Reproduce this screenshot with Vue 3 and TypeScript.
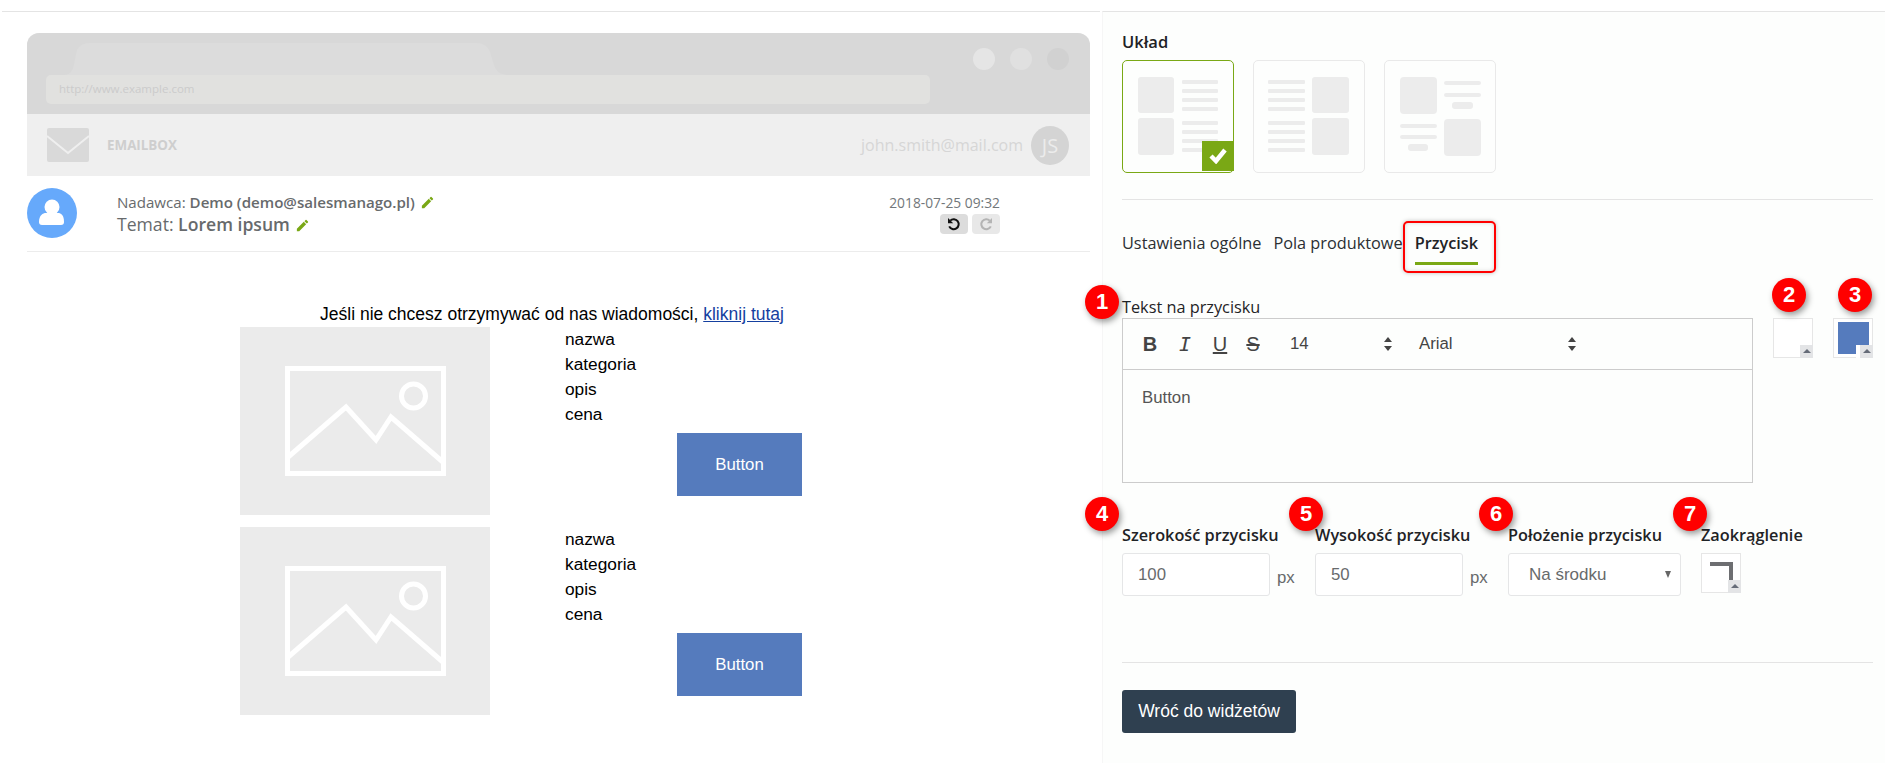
<script setup lang="ts">
interface Field { label: string; value: string; badge: string }
const products: string[] = ['nazwa', 'kategoria', 'opis', 'cena']
const rows: number[] = [1, 2]
const sizeFields: Field[] = [
  { label: 'Szerokość przycisku', value: '100', badge: '4' },
  { label: 'Wysokość przycisku', value: '50', badge: '5' },
]
</script>

<template>
  <div class="page">
    <section class="left">
      <div class="mock">
        <div class="chrome">
          <div class="chrome-main">
            <svg class="tab-shape" width="445" height="32" viewBox="0 0 445 32">
              <path d="M0 32C6 32 9 28 10 21L12 11C13 4 18 0 26 0L412 0C420 0 425 4 427 12L430 22C432 28 436 32 445 32Z" fill="#dcdcdc" />
            </svg>
            <div class="url">http://www.example.com</div>
          </div>
          <div class="dots">
            <i class="dot d1"></i><i class="dot d2"></i><i class="dot d3"></i>
          </div>
        </div>
        <div class="mailbar">
          <svg class="envelope" width="42" height="34" viewBox="0 0 42 34">
            <rect width="42" height="34" rx="2" fill="#d9d9d9" />
            <path d="M0 8L21 25L42 8" fill="none" stroke="#efefef" stroke-width="2" />
          </svg>
          <span class="brand">EMAILBOX</span>
          <span class="account">john.smith@mail.com</span>
          <span class="initials">JS</span>
        </div>
      </div>

      <header class="msg">
        <svg class="avatar" width="50" height="50" viewBox="0 0 50 50">
          <circle cx="25" cy="25" r="25" fill="#66a9fb" />
          <circle cx="25" cy="19" r="7.5" fill="#fff" />
          <path d="M12 34C12 27 16 25 19 25L31 25C34 25 37 27 37 34C37 36 36 37 34 37L15 37C13 37 12 36 12 34Z" fill="#fff" />
        </svg>
        <div class="meta">
          <div class="sender">
            Nadawca: <b>Demo (demo@salesmanago.pl)</b>
            <svg class="pencil" width="15" height="15" viewBox="0 0 24 24"><path d="M3 17.25V21h3.75L17.81 9.94l-3.75-3.75L3 17.25zM20.71 7.04a1 1 0 000-1.41l-2.34-2.34a1 1 0 00-1.41 0l-1.83 1.83 3.75 3.75 1.83-1.83z" /></svg>
          </div>
          <div class="subject">
            Temat: <b>Lorem ipsum</b>
            <svg class="pencil" width="15" height="15" viewBox="0 0 24 24"><path d="M3 17.25V21h3.75L17.81 9.94l-3.75-3.75L3 17.25zM20.71 7.04a1 1 0 000-1.41l-2.34-2.34a1 1 0 00-1.41 0l-1.83 1.83 3.75 3.75 1.83-1.83z" /></svg>
          </div>
        </div>
        <div class="when">
          <div class="date">2018-07-25 09:32</div>
          <div class="history">
            <span class="hist on">
              <svg width="14" height="14" viewBox="0 0 14 14"><path d="M3.2 3.6A5 5 0 1 1 2.2 9.4" fill="none" stroke="#111" stroke-width="2" /><path d="M1 1V6.2H6.2Z" fill="#111" /></svg>
            </span>
            <span class="hist">
              <svg width="14" height="14" viewBox="0 0 14 14"><g transform="matrix(-1 0 0 1 14 0)"><path d="M3.2 3.6A5 5 0 1 1 2.2 9.4" fill="none" stroke="#b4b4b4" stroke-width="2" /><path d="M1 1V6.2H6.2Z" fill="#b4b4b4" /></g></svg>
            </span>
          </div>
        </div>
      </header>

      <div class="mail">
        <p class="unsub">Jeśli nie chcesz otrzymywać od nas wiadomości, <a href="#">kliknij tutaj</a></p>
        <div v-for="row in rows" :key="row" class="product">
          <div class="photo">
            <svg width="161" height="110" viewBox="0 0 161 110">
              <rect x="2.500" y="2.500" width="156" height="105" fill="none" stroke="#fff" stroke-width="5" />
              <circle cx="128.500" cy="30" r="12" fill="none" stroke="#fff" stroke-width="5" />
              <path d="M2 92L61 41L91 74L106 51L159 97" fill="none" stroke="#fff" stroke-width="5" />
            </svg>
          </div>
          <div class="info">
            <div v-for="p in products" :key="p" class="line">{{ p }}</div>
            <div class="cta">Button</div>
          </div>
        </div>
      </div>
    </section>

    <section class="right">
      <div class="label heading">Układ</div>
      <div class="layouts">
        <div class="card selected">
          <svg width="110" height="111" viewBox="0 0 110 111" fill="#ececec">
            <rect x="15" y="16" width="36" height="36" rx="3" /><rect x="15" y="57" width="36" height="37" rx="3" />
            <rect x="59" y="19" width="36" height="4" rx="1" /><rect x="59" y="28" width="36" height="4" rx="1" /><rect x="59" y="37" width="36" height="4" rx="1" /><rect x="59" y="46" width="36" height="4" rx="1" />
            <rect x="59" y="60" width="36" height="4" rx="1" /><rect x="59" y="69" width="36" height="4" rx="1" /><rect x="59" y="78" width="36" height="4" rx="1" /><rect x="59" y="87" width="36" height="4" rx="1" />
          </svg>
          <span class="check">
            <svg width="18" height="16" viewBox="0 0 18 16"><path d="M2 8L7 13L16 2" fill="none" stroke="#fff" stroke-width="4.500" /></svg>
          </span>
        </div>
        <div class="card">
          <svg width="110" height="111" viewBox="0 0 110 111" fill="#ececec">
            <rect x="58" y="16" width="37" height="36" rx="3" /><rect x="58" y="57" width="37" height="37" rx="3" />
            <rect x="14" y="19" width="37" height="4" rx="1" /><rect x="14" y="28" width="37" height="4" rx="1" /><rect x="14" y="37" width="37" height="4" rx="1" /><rect x="14" y="46" width="37" height="4" rx="1" />
            <rect x="14" y="60" width="37" height="4" rx="1" /><rect x="14" y="69" width="37" height="4" rx="1" /><rect x="14" y="78" width="37" height="4" rx="1" /><rect x="14" y="87" width="37" height="4" rx="1" />
          </svg>
        </div>
        <div class="card">
          <svg width="110" height="111" viewBox="0 0 110 111" fill="#ececec">
            <rect x="15" y="16" width="37" height="37" rx="4" /><rect x="59" y="58" width="37" height="37" rx="4" />
            <rect x="59" y="20" width="37" height="4" rx="2" /><rect x="59" y="32" width="37" height="4" rx="2" /><rect x="67" y="41" width="21" height="7" rx="3" />
            <rect x="15" y="63" width="37" height="4" rx="2" /><rect x="15" y="74" width="37" height="4" rx="2" /><rect x="23" y="83" width="20" height="7" rx="3" />
          </svg>
        </div>
      </div>
      <div class="rule first"></div>

      <nav class="tabs">
        <span class="tab">Ustawienia ogólne</span>
        <span class="tab">Pola produktowe</span>
        <span class="tab active">Przycisk<i class="marker"></i></span>
      </nav>

      <div class="text-row">
        <div class="text-field">
          <span class="badge b1">1</span>
          <div class="label tight">Tekst na przycisku</div>
          <div class="editor">
            <div class="toolbar">
              <b class="tool t-b">B</b>
              <i class="tool t-i">I</i>
              <u class="tool t-u">U</u>
              <s class="tool t-s">S</s>
              <span class="pick p-size">14<span class="updown"></span></span>
              <span class="pick p-font">Arial<span class="updown"></span></span>
            </div>
            <div class="editor-body">Button</div>
          </div>
        </div>
        <div class="swatch s-white"><span class="badge over">2</span><i class="flag"></i></div>
        <div class="swatch s-blue"><span class="badge over">3</span><i class="fill"></i><i class="flag"></i></div>
      </div>

      <div class="size-row">
        <div v-for="f in sizeFields" :key="f.badge" class="size-field">
          <span class="badge side">{{ f.badge }}</span>
          <div class="label tight2">{{ f.label }}</div>
          <div class="with-unit">
            <input class="input" :value="f.value" readonly />
            <span class="unit">px</span>
          </div>
        </div>
        <div class="size-field">
          <span class="badge side">6</span>
          <div class="label tight2">Położenie przycisku</div>
          <div class="select">Na środku<i class="caret"></i></div>
        </div>
        <div class="size-field">
          <span class="badge side">7</span>
          <div class="label tight2">Zaokrąglenie</div>
          <div class="swatch corner"><i class="corner-mark"></i><i class="flag"></i></div>
        </div>
      </div>

      <div class="rule last"></div>
      <button class="back" type="button">Wróć do widżetów</button>
    </section>
  </div>
</template>

<style>
html, body { margin: 0; background: #fff; overflow: hidden; }
</style>

<style scoped>
.page {
  display: flex;
  box-sizing: border-box;
  width: 1885px;
  height: 763px;
  padding-top: 11px;
  font-family: "Open Sans", sans-serif;
  overflow: hidden;
}
.left {
  flex: none;
  box-sizing: border-box;
  width: 1098px;
  margin-left: 2px;
  padding: 21px 10px 0 25px;
  border-top: 1px solid #e4e4e4;
}
.mock { height: 143px; border-radius: 12px 12px 0 0; overflow: hidden; background: #efefef; }
.chrome { display: flex; height: 81px; box-sizing: border-box; padding: 10px 0 10px 19px; background: #d8d8d8; }
.chrome-main { display: flex; flex-direction: column; width: 884px; }
.tab-shape { display: block; margin-left: 18px; }
.url {
  height: 29px;
  padding-left: 13px;
  line-height: 27px;
  border-radius: 5px;
  background: #e1e1df;
  color: #cbcbcb;
  font-size: 11.500px;
}
.dots { display: flex; gap: 15px; margin: 5px 0 0 43px; height: 22px; }
.dot { width: 22px; height: 22px; border-radius: 50%; }
.d1 { background: #e5e5e5; }
.d2 { background: #e0e0e0; }
.d3 { background: #d1d1d1; }
.mailbar { display: flex; align-items: center; height: 62px; padding: 0 21px 0 20px; }
.envelope { flex: none; }
.brand { margin-left: 18px; font-size: 13.400px; font-weight: 700; color: #cecece; }
.account { margin-left: auto; font-size: 16px; color: #d6d6d6; }
.initials {
  display: flex;
  align-items: center;
  justify-content: center;
  width: 38px;
  height: 39px;
  margin-left: 8px;
  border-radius: 50%;
  background: #d4d4d4;
  color: #ececec;
  font-size: 20px;
}
.msg { display: flex; height: 76px; box-sizing: border-box; border-bottom: 1px solid #ececec; }
.avatar { flex: none; margin-top: 12px; }
.meta { margin: 16px 0 0 40px; color: #676a6c; }
.sender { height: 20px; line-height: 20px; font-size: 15.100px; }
.sender b, .subject b { font-weight: 600; }
.subject { height: 27px; margin-top: -1px; line-height: 27px; font-size: 17.600px; }
.pencil { fill: #7aa815; margin-left: 5px; vertical-align: -2px; }
.when { margin: 17px 90px 0 auto; display: flex; flex-direction: column; align-items: flex-end; }
.date { height: 20px; line-height: 20px; font-size: 13.800px; color: #72777a; }
.history { display: flex; gap: 4px; margin-top: 1px; }
.hist {
  display: flex;
  align-items: center;
  justify-content: center;
  width: 28px;
  height: 20px;
  border-radius: 4px;
  background: #e8e8e8;
}
.hist.on { background: #dcdcdc; }
.mail { width: 624px; margin-left: 213px; font-family: "Liberation Sans", Arial, sans-serif; color: #000; }
.unsub { margin: 0; height: 24px; padding-top: 51px; line-height: 22px; font-size: 17.500px; text-align: center; }
.unsub a { color: #15409f; }
.product { display: flex; margin-bottom: 12px; }
.photo {
  display: flex;
  align-items: center;
  justify-content: center;
  width: 250px;
  height: 188px;
  background: #ebebeb;
}
.info { margin-left: 75px; }
.line { height: 25px; line-height: 25px; font-size: 17.300px; }
.cta {
  width: 125px;
  height: 63px;
  margin: 6px 0 0 112px;
  line-height: 63px;
  text-align: center;
  background: #557bbd;
  color: #fff;
  font-size: 16.800px;
}
.right {
  flex: 1;
  min-width: 0;
  box-sizing: border-box;
  margin-left: 2px;
  padding: 20px 12px 0 19px;
  border-top: 1px solid #e4e4e4;
  border-left: 1px solid #f6f6f6;
  background: #fdfefd;
}
.label { height: 20px; line-height: 20px; font-size: 16.300px; font-weight: 600; color: #1f2326; white-space: nowrap; }
.label.heading { font-size: 16.500px; }
.layouts { display: flex; gap: 19px; margin-top: 8px; }
.card {
  position: relative;
  width: 112px;
  height: 113px;
  box-sizing: border-box;
  border: 1px solid #e9e9e9;
  border-radius: 5px;
}
.card svg { display: block; }
.card.selected { border-color: #7aa815; }
.check {
  position: absolute;
  right: -1px;
  bottom: 1px;
  display: flex;
  align-items: center;
  justify-content: center;
  width: 32px;
  height: 30px;
  background: #7aa815;
}
.rule { height: 1px; background: #e4e4e4; }
.rule.first { margin-top: 26px; }
.tabs { display: flex; padding-top: 33px; }
.tab { position: relative; padding-bottom: 12px; height: 20px; line-height: 20px; font-size: 16.300px; color: #2b2f33; margin-right: 12px; white-space: nowrap; }
.tab.active { font-weight: 600; color: #1f2326; }
.marker { position: absolute; left: 0; right: 0; bottom: 0; height: 3px; background: #7aa815; }
.tab.active::after {
  content: "";
  position: absolute;
  left: -12px;
  right: -18px;
  top: -12px;
  bottom: -8px;
  border: 2px solid #f00;
  border-radius: 5px;
  box-shadow: 0 0 4px rgba(0, 0, 0, 0.25), inset 0 0 4px rgba(0, 0, 0, 0.15);
}
.text-row { display: flex; margin-top: 32px; }
.text-field { position: relative; width: 632px; }
.label.tight { font-weight: 400; margin-bottom: 1px; }
.badge {
  position: absolute;
  display: flex;
  align-items: center;
  justify-content: center;
  width: 34px;
  height: 34px;
  border-radius: 50%;
  background: #f00;
  color: #fff;
  font-family: "Liberation Sans", Arial, sans-serif;
  font-size: 22px;
  font-weight: 700;
  box-shadow: 2px 3px 6px rgba(0, 0, 0, 0.4);
  z-index: 2;
}
.b1 { left: -37px; top: -12px; }
.editor { box-sizing: border-box; height: 165px; border: 1px solid #ccc; font-family: "Liberation Sans", Arial, sans-serif; }
.toolbar { display: flex; align-items: center; height: 50px; border-bottom: 1px solid #ccc; color: #444; }
.tool { flex: none; width: 16px; font-size: 20px; text-align: center; font-style: normal; }
.t-b { margin-left: 19px; }
.t-i { margin-left: 19px; font-family: "DejaVu Sans Mono", monospace; font-style: italic; }
.t-u { margin-left: 19px; }
.t-s { margin-left: 17px; }
.pick { display: flex; align-items: center; flex: none; justify-content: space-between; font-size: 16.800px; }
.p-size { width: 102px; margin-left: 29px; }
.p-font { width: 157px; margin-left: 27px; }
.updown { position: relative; width: 8px; height: 14px; }
.updown::before, .updown::after {
  content: "";
  position: absolute;
  left: 0;
  border-left: 4px solid transparent;
  border-right: 4px solid transparent;
}
.updown::before { top: 0; border-bottom: 5px solid #444; }
.updown::after { bottom: 0; border-top: 5px solid #444; }
.editor-body { padding: 18px 19px; line-height: 20px; font-size: 16.800px; color: #555; }
.swatch {
  position: relative;
  box-sizing: border-box;
  width: 40px;
  height: 40px;
  border: 1px solid #e6e6e6;
  background: #fff;
}
.s-white, .s-blue { margin: 21px 0 0 20px; }
.flag {
  position: absolute;
  right: -1px;
  bottom: -1px;
  width: 13px;
  height: 13px;
  background: #e3e4e6;
}
.flag::after {
  content: "";
  position: absolute;
  left: 3px;
  top: 4px;
  border-left: 4px solid transparent;
  border-right: 4px solid transparent;
  border-bottom: 4px solid #666c78;
}
.fill {
  position: absolute;
  left: 4px;
  top: 3px;
  width: 31px;
  height: 32px;
  background: #557bbd;
}
.s-blue .flag { box-shadow: -4px 0 0 #fff; }
.badge.over { left: -2px; top: -41px; }
.s-blue .badge.over { left: 4px; }
.size-row { display: flex; margin-top: 42px; }
.size-field { position: relative; flex: none; width: 193px; }
.label.tight2 { margin-bottom: 8px; }
.badge.side { left: -37px; top: -28px; }
.size-field:nth-child(2) .badge.side { left: -26px; }
.size-field:nth-child(3) .badge.side { left: -29px; }
.size-field:nth-child(4) .badge.side { left: -28px; }
.with-unit { display: flex; }
.input {
  box-sizing: border-box;
  width: 148px;
  height: 43px;
  padding: 0 15px;
  border: 1px solid #e5e6e7;
  border-radius: 3px;
  outline: none;
  background: #fff;
  color: #676a6c;
  font-family: "Liberation Sans", Arial, sans-serif;
  font-size: 16.800px;
}
.unit { margin: 14px 0 0 7px; font-family: "Liberation Sans", Arial, sans-serif; font-size: 16.800px; line-height: 22px; color: #676a6c; }
.select {
  position: relative;
  box-sizing: border-box;
  width: 173px;
  height: 43px;
  padding-left: 20px;
  border: 1px solid #e5e6e7;
  border-radius: 3px;
  background: #fff;
  line-height: 41px;
  color: #676a6c;
  font-family: "Liberation Sans", Arial, sans-serif;
  font-size: 17px;
}
.caret {
  position: absolute;
  right: 9px;
  top: 17px;
  border-left: 3.500px solid transparent;
  border-right: 3.500px solid transparent;
  border-top: 7px solid #666;
}
.corner-mark {
  position: absolute;
  left: 8px;
  top: 8px;
  width: 19px;
  height: 22px;
  border-top: 4px solid #6d6e71;
  border-right: 4px solid #6d6e71;
}
.rule.last { margin-top: 66px; }
.back {
  display: block;
  width: 174px;
  height: 43px;
  margin-top: 27px;
  padding: 0;
  border: 0;
  border-radius: 3px;
  background: #2f4050;
  color: #fff;
  font-family: "Liberation Sans", Arial, sans-serif;
  font-size: 17.500px;
}
</style>
